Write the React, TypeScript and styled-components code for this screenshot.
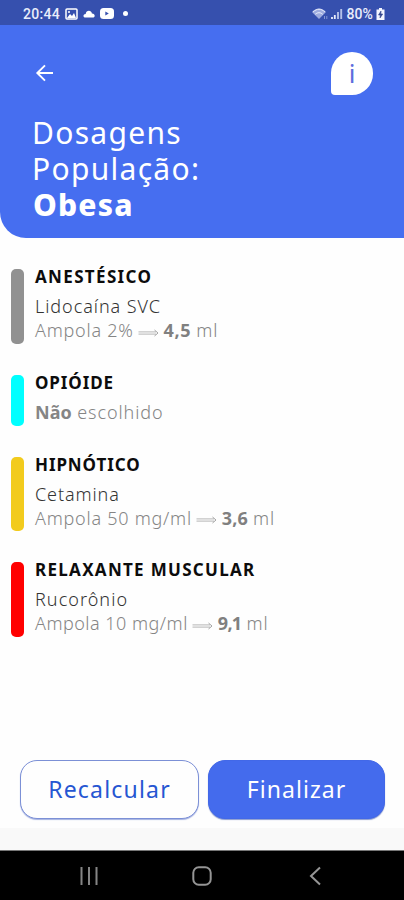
import React from 'react';
import styled, { createGlobalStyle } from 'styled-components';

const GlobalStyle = createGlobalStyle`
  * { box-sizing: border-box; }
  body { margin: 0; background: #fefefe; }
`;

const Screen = styled.div`
  display: flex;
  flex-direction: column;
  width: 404px;
  height: 900px;
  overflow: hidden;
  background: #fefefe;
  font-family: "Noto Sans", "Open Sans", sans-serif;
`;

const StatusBar = styled.div`
  flex: none;
  display: flex;
  align-items: center;
  justify-content: space-between;
  height: 25px;
  padding: 2px 19px 0 23px;
  background: #3650ae;
  color: #e9edfb;
  font: 500 14px/20px Roboto, sans-serif;
`;

const StatusGroup = styled.div<{ $gap: number }>`
  display: flex;
  align-items: center;
  gap: ${p => p.$gap}px;
`;

const StatusText = styled.span<{ $spacing: number }>`
  letter-spacing: ${p => p.$spacing}px;
`;

const Dot = styled.i`
  width: 5px;
  height: 5px;
  margin-left: 4px;
  border-radius: 50%;
  background: #fff;
`;

const Header = styled.header`
  flex: none;
  height: 213px;
  padding: 26px 31px 0 33px;
  border-bottom-left-radius: 26px;
  background: #466ef0;
  color: #fff;
`;

const HeaderActions = styled.div`
  display: flex;
  align-items: center;
  justify-content: space-between;
  height: 44px;
`;

const BackButton = styled.button`
  display: flex;
  padding: 0;
  border: 0;
  margin-left: 2px;
  background: none;
`;

const InfoButton = styled.button`
  display: flex;
  align-items: center;
  justify-content: center;
  width: 42px;
  height: 43px;
  padding: 0;
  border: 0;
  border-radius: 21px 21px 21px 4px;
  background: #fff;
  color: #5d6ddd;
  font: 400 26px/40px "Noto Sans", sans-serif;
`;

const Title = styled.h1`
  margin: 20px 0 0 -1px;
  font-size: 30px;
  line-height: 36px;
  font-weight: 400;
  letter-spacing: 1.3px;
`;

const TitleLine = styled.span`
  display: block;
`;

const TitleStrong = styled(TitleLine)`
  margin-left: 1px;
  font-weight: 800;
  letter-spacing: 1.2px;
`;

const List = styled.main`
  flex: 1;
  display: flex;
  flex-direction: column;
  gap: 31px;
  padding: 31px 11px 0;
`;

const Item = styled.section<{ $short?: boolean }>`
  flex: none;
  display: flex;
  gap: 11px;
  height: ${p => (p.$short ? 51 : 74.5)}px;
`;

const ColorBar = styled.div<{ $color: string }>`
  width: 13px;
  border-radius: 5px;
  background: ${p => p.$color};
`;

const ItemText = styled.div`
  margin-top: -4px;
  font-size: 18px;
  line-height: 24px;
  white-space: nowrap;
`;

const Heading = styled.h2<{ $spacing: number }>`
  margin: 0 0 5px;
  color: #0c0c0c;
  font-size: 17px;
  line-height: 24px;
  font-weight: 700;
  letter-spacing: ${p => p.$spacing}px;
`;

const Drug = styled.div<{ $spacing: number }>`
  color: #333;
  font-weight: 320;
  letter-spacing: ${p => p.$spacing}px;
`;

const Dose = styled.div`
  display: flex;
  align-items: center;
  color: #858585;
  font-weight: 320;
`;

const Ampoule = styled.span<{ $spacing: number }>`
  letter-spacing: ${p => p.$spacing}px;
`;

const Amount = styled.b<{ $spacing: number }>`
  margin: 0 5px 0 5px;
  color: #808080;
  font-weight: 700;
  letter-spacing: ${p => p.$spacing}px;
`;

const Arrow = styled.svg`
  flex: none;
  width: 21px;
  height: 10px;
  margin: 5px 0 0 4px;
`;

const Missing = styled.div`
  color: #858585;
  font-weight: 320;
  letter-spacing: 0.9px;

  b {
    font-weight: 700;
    color: #858585;
    letter-spacing: 0;
  }
`;

const Actions = styled.div`
  flex: none;
  display: flex;
  gap: 9px;
  padding: 0 19px 9px 20px;
`;

const ActionButton = styled.button<{ $primary?: boolean; $spacing: number }>`
  flex: ${p => (p.$primary ? '0 0 177px' : '0 0 179px')};
  height: 59px;
  padding: 0 0 2px;
  border: 1px solid ${p => (p.$primary ? '#4268e8' : '#7c90d6')};
  border-radius: 17px;
  background: ${p => (p.$primary ? '#446bed' : '#fefefe')};
  box-shadow: 0 1px 1px ${p => (p.$primary ? '#8a9bd0' : '#a5b2e2')};
  color: ${p => (p.$primary ? '#fff' : '#2656d2')};
  font: 400 23px/32px "Noto Sans", "Open Sans", sans-serif;
  letter-spacing: ${p => p.$spacing}px;
`;

const Footer = styled.div`
  flex: none;
  height: 22px;
  background: #f9f9f9;
`;

const NavBar = styled.nav`
  flex: none;
  display: flex;
  justify-content: space-between;
  align-items: center;
  height: 50px;
  padding: 0 82px 0 79px;
  border-top: 1px solid #777;
  background: #000;
`;

const HomeIcon = styled.svg`
  margin-right: 3px;
`;

const DoseArrow = () => (
  <Arrow viewBox="0 0 21 10" fill="none" stroke="#a3a3a3">
    <path d="M0.5 3.9H18M0.5 6.1H18" strokeWidth="0.8" />
    <path d="M16.5 2L20 5L16.5 8" strokeWidth="1" />
  </Arrow>
);

type Entry = {
  color: string;
  heading: string;
  headingSpacing: number;
  drug?: string;
  drugSpacing?: number;
  ampoule?: string;
  ampouleSpacing?: number;
  amount?: string;
  amountSpacing?: number;
};

const entries: Entry[] = [
  { color: '#919191', heading: 'ANESTÉSICO', headingSpacing: 1.35, drug: 'Lidocaína SVC', drugSpacing: 0.95, ampoule: 'Ampola 2%', ampouleSpacing: 0.75, amount: '4,5', amountSpacing: 0.6 },
  { color: '#00ffff', heading: 'OPIÓIDE', headingSpacing: 0.9 },
  { color: '#f2cb1d', heading: 'HIPNÓTICO', headingSpacing: 0.9, drug: 'Cetamina', drugSpacing: 0.9, ampoule: 'Ampola 50 mg/ml', ampouleSpacing: 0.75, amount: '3,6', amountSpacing: 0.1 },
  { color: '#ff0000', heading: 'RELAXANTE MUSCULAR', headingSpacing: 1.3, drug: 'Rucorônio', drugSpacing: 1.05, ampoule: 'Ampola 10 mg/ml', ampouleSpacing: 0.48, amount: '9,1', amountSpacing: -0.7 },
];

export default function App() {
  return (
    <Screen>
      <GlobalStyle />
      <StatusBar>
        <StatusGroup $gap={5}>
          <StatusText $spacing={0.3}>20:44</StatusText>
          <svg width="13" height="12" viewBox="0 0 13 12">
            <rect x="1" y="1" width="11" height="10" rx="1" fill="none" stroke="#fff" strokeWidth="1.5" />
            <path d="M2 10L5 6L7 8L9 5L11 10Z" fill="#fff" />
            <circle cx="4" cy="4" r="1" fill="#fff" />
          </svg>
          <svg width="12" height="8" viewBox="0 0 12 8">
            <path d="M2.5 7.5C-.5 7.5 0 4 2.7 4C3-.2 8.5-.3 8.9 3.5C12.3 3.4 12.6 7.5 9.7 7.5Z" fill="#fff" />
          </svg>
          <svg width="14" height="11" viewBox="0 0 14 11">
            <rect width="14" height="11" rx="3.5" fill="#fff" />
            <path d="M5.3 3.4L8.8 5.5L5.3 7.6Z" fill="#3650ae" />
          </svg>
          <Dot />
        </StatusGroup>
        <StatusGroup $gap={3}>
          <svg width="16" height="12" viewBox="0 0 16 12">
            <path d="M0 4C4-.7 10-.7 14 4L7 11Z" fill="#9eacdf" />
            <path d="M1 4C5 .3 9 .3 13 4M3.3 6.3C5.5 4.2 8.5 4.2 10.7 6.3" fill="none" stroke="#e9edfb" />
            <path d="M12.5 8V11M14.8 8V11" stroke="#8495d3" />
          </svg>
          <svg width="12" height="12" viewBox="0 0 12 12">
            <path d="M1 11V9M3.8 11V7" stroke="#e9edfb" strokeWidth="1.8" />
            <path d="M7 11V4M10.2 11V1" stroke="#b4c0e8" strokeWidth="1.9" />
          </svg>
          <StatusText $spacing={0.1}>80%</StatusText>
          <svg width="9" height="12" viewBox="0 0 9 12">
            <path d="M3 0H6V1.5H8.5V12H.5V1.5H3Z" fill="#f4f6ff" />
            <path d="M5 3L2.5 7H4.3L4 10L6.7 6H4.8Z" fill="#33458d" stroke="#33458d" strokeWidth=".6" />
          </svg>
        </StatusGroup>
      </StatusBar>
      <Header>
        <HeaderActions>
          <BackButton aria-label="Voltar">
            <svg width="20" height="20" viewBox="0 0 20 20" fill="none" stroke="#fff" strokeWidth="1.9">
              <path d="M18 10H2.5M10 2.3L2.3 10L10 17.7" />
            </svg>
          </BackButton>
          <InfoButton>i</InfoButton>
        </HeaderActions>
        <Title>
          <TitleLine>Dosagens</TitleLine>
          <TitleLine>População:</TitleLine>
          <TitleStrong>Obesa</TitleStrong>
        </Title>
      </Header>
      <List>
        {entries.map(e => (
          <Item key={e.heading} $short={!e.drug}>
            <ColorBar $color={e.color} />
            <ItemText>
              <Heading $spacing={e.headingSpacing}>{e.heading}</Heading>
              {e.drug ? (
                <>
                  <Drug $spacing={e.drugSpacing ?? 1}>{e.drug}</Drug>
                  <Dose>
                    <Ampoule $spacing={e.ampouleSpacing ?? 0}>{e.ampoule}</Ampoule>
                    <DoseArrow />
                    <Amount $spacing={e.amountSpacing ?? 0}>{e.amount}</Amount>
                    <Ampoule $spacing={0.9}>ml</Ampoule>
                  </Dose>
                </>
              ) : (
                <Missing><b>Não</b> escolhido</Missing>
              )}
            </ItemText>
          </Item>
        ))}
      </List>
      <Actions>
        <ActionButton $spacing={1.2}>Recalcular</ActionButton>
        <ActionButton $primary $spacing={1.05}>Finalizar</ActionButton>
      </Actions>
      <Footer />
      <NavBar>
        <svg width="20" height="20" viewBox="0 0 20 20" stroke="#858585" strokeWidth="2">
          <path d="M2.5 1V19M10 1V19M17.5 1V19" />
        </svg>
        <HomeIcon width="20" height="20" viewBox="0 0 20 20" fill="none" stroke="#959595" strokeWidth="2">
          <rect x="1.3" y="1.3" width="17.4" height="17.4" rx="5.5" />
        </HomeIcon>
        <svg width="14" height="20" viewBox="0 0 14 20" fill="none" stroke="#959595" strokeWidth="2">
          <path d="M12 1.5L3 10L12 18.5" />
        </svg>
      </NavBar>
    </Screen>
  );
}
